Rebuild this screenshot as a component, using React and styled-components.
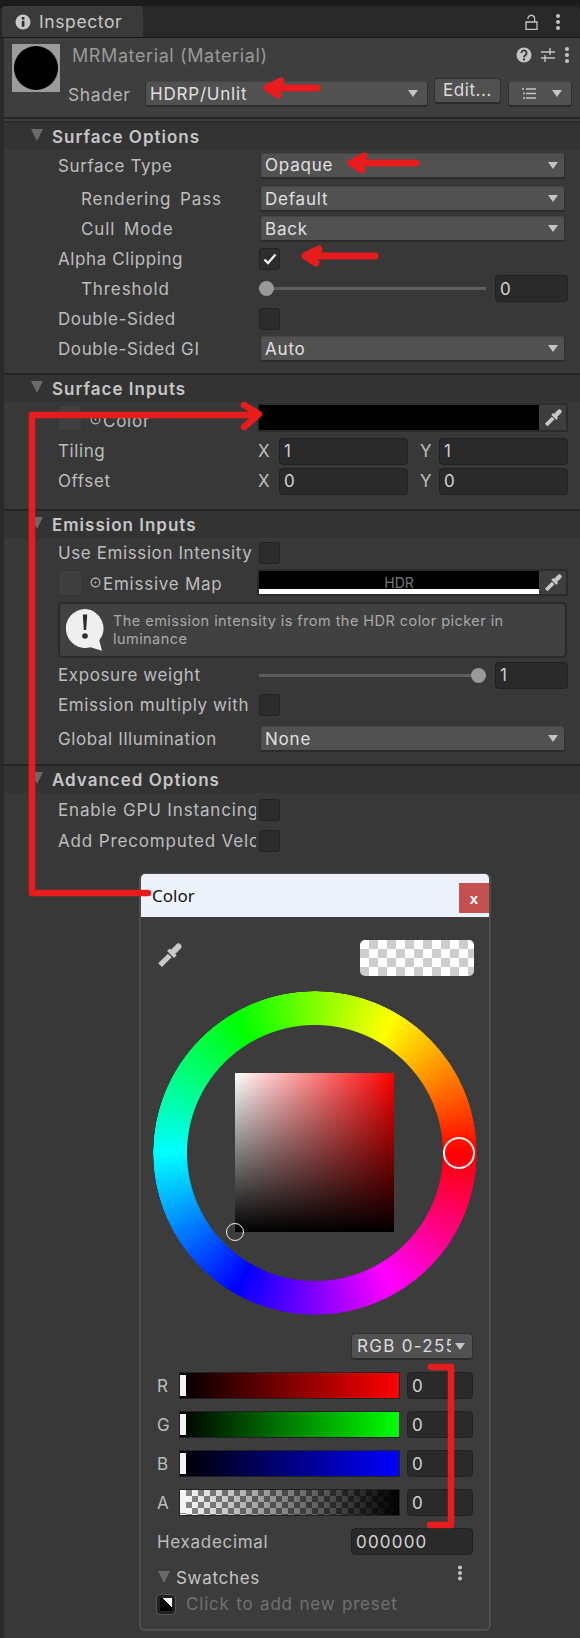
import styled, { createGlobalStyle } from "styled-components";

const GlobalStyle = createGlobalStyle`
  html, body { margin: 0; padding: 0; background: #2a2a2a; }
  body { width: 580px; height: 1638px; overflow: hidden; }
  * { box-sizing: border-box; }
`;

const Page = styled.div`
  position: relative;
  width: 580px;
  height: 1638px;
  overflow: hidden;
  display: flex;
  flex-direction: column;
  background: #2a2a2a;
  color: #c4c4c4;
  font-family: Inter, "Noto Sans", sans-serif;
  font-size: 17px;
  letter-spacing: 0.6px;
`;

const TabBar = styled.div`
  flex: none;
  height: 38px;
  padding-top: 6px;
  background: #1c1c1c;
`;

const TabStrip = styled.div`
  height: 100%;
  padding: 0 19px 0 2px;
  background: #292929;
  border-bottom: 1px solid #1a1a1a;
  border-radius: 5px 5px 0 0;
  display: flex;
  justify-content: space-between;
  align-items: stretch;
`;

const Tab = styled.div`
  width: 141px;
  background: #3a3a3a;
  border-radius: 4px 4px 0 0;
  padding-left: 13px;
  display: flex;
  align-items: center;
  gap: 8px;
  font-size: 17.5px;
  color: #c8c8c8;
`;

const TabTools = styled.div`
  display: flex;
  align-items: center;
  gap: 17px;
`;

const Panel = styled.div`
  flex: 1;
  margin-left: 3px;
  border-left: 1px solid #2a2a2a;
  background: #383838;
`;

const MaterialHeader = styled.div`
  height: 79px;
  padding: 3px 8px 0 8px;
  background: #3e3e3e;
  display: grid;
  grid-template-columns: 48px 1fr;
`;

const Thumb = styled.div`
  width: 48px;
  height: 48px;
  margin-top: 3px;
  background: #9c9c9c;
  display: flex;
  align-items: center;
  justify-content: center;
  &::after {
    content: "";
    width: 44px;
    height: 44px;
    border-radius: 50%;
    background: #000;
  }
`;

const HeaderBody = styled.div`
  display: flex;
  flex-direction: column;
`;

const NameRow = styled.div`
  height: 28px;
  padding: 0 0 0 12px;
  display: flex;
  align-items: center;
  justify-content: space-between;
  font-size: 18px;
  color: #999;
`;

const HeaderIcons = styled.div`
  display: flex;
  align-items: center;
  gap: 8px;
  padding-right: 2px;
`;

const ShaderRow = styled.div`
  margin: 7px 0 0 8px;
  height: 36px;
  display: flex;
  align-items: center;
`;

const ShaderLabel = styled.div`
  width: 77px;
  flex: none;
  color: #b4b4b4;
  font-size: 17.5px;
`;

const Select = styled.div`
  width: ${(p) => p.$w}px;
  height: ${(p) => p.$h || 26}px;
  margin-left: ${(p) => (p.$main ? 1 : 0)}px;
  flex: none;
  background: #515151;
  border: 1px solid #303030;
  border-top-color: #454545;
  border-bottom: 2px solid #2b2b2b;
  border-radius: 3px;
  padding: 0 ${(p) => (p.$main ? 6 : 9)}px 0 4px;
  display: flex;
  align-items: center;
  justify-content: space-between;
  color: #e0e0e0;
  letter-spacing: 0.8px;
  white-space: nowrap;
  overflow: hidden;
`;

const Caret = styled.span`
  flex: none;
  width: 0;
  height: 0;
  border-left: 5.5px solid transparent;
  border-right: 5.5px solid transparent;
  border-top: 7px solid #c4c4c4;
`;

const EditButton = styled.div`
  flex: none;
  width: 67px;
  height: 26px;
  margin: -7px 7px 0 6px;
  background: #515151;
  border: 1px solid #303030;
  border-bottom: 2px solid #2b2b2b;
  border-radius: 4px;
  display: flex;
  align-items: center;
  justify-content: center;
  color: #dcdcdc;
`;

const Rule = styled.div`
  height: 6px;
  border-top: 2px solid #242424;
  border-bottom: 2px solid #2b2b2b;
  background: #3c3c3c;
`;

const SectionHead = styled.div`
  height: 27px;
  padding-left: 27px;
  display: flex;
  align-items: center;
  gap: 9px;
  background: #333333;
  font-weight: 600;
  letter-spacing: 1px;
  color: #c6c6c6;
`;

const SectionRule = styled.div`
  height: 2px;
  background: #242424;
`;

const Triangle = styled.span`
  flex: none;
  margin-top: -3px;
  width: 0;
  height: 0;
  border-left: 6.5px solid transparent;
  border-right: 6.5px solid transparent;
  border-top: 12px solid #6a6a6a;
`;

const Rows = styled.div`
  padding-bottom: ${(p) => p.$bottom || 0}px;
`;

const Row = styled.div`
  height: ${(p) => p.$h || 30}px;
  margin-top: ${(p) => p.$mt || 0}px;
  padding: 0 12px 0 ${(p) => (p.$indent ? 77 : 54)}px;
  display: flex;
  align-items: center;
`;

const Label = styled.div`
  flex: none;
  width: ${(p) => p.$w || (p.$indent ? 178 : 201)}px;
  white-space: nowrap;
  overflow: hidden;
  color: #bdbdbd;
  ${(p) => p.$indent && "letter-spacing: 0.9px; word-spacing: 3px;"}
  ${(p) => p.$clipped && "letter-spacing: 0.85px;"}
`;

const Checkbox = styled.div`
  flex: none;
  width: 21px;
  height: 22px;
  margin-left: ${(p) => p.$ml || 0}px;
  background: #2c2c2c;
  border: 1px solid #222;
  border-radius: 3px;
  display: flex;
  align-items: center;
  justify-content: center;
`;

const Slider = styled.div`
  position: relative;
  width: 227px;
  height: 3px;
  flex: none;
  background: #5e5e5e;
  margin-right: 9px;
`;

const Knob = styled.span`
  position: absolute;
  top: -6px;
  left: ${(p) => p.$left}px;
  width: 15px;
  height: 15px;
  border-radius: 50%;
  background: #999;
`;

const NumberField = styled.div`
  flex: none;
  width: ${(p) => p.$w}px;
  height: 27px;
  background: #2a2a2a;
  border: 1px solid #212121;
  border-radius: 4px;
  padding-left: 4px;
  display: flex;
  align-items: center;
  color: #d2d2d2;
`;

const AxisName = styled.span`
  flex: none;
  width: ${(p) => p.$w}px;
  padding-left: ${(p) => p.$pad || 0}px;
  color: #bdbdbd;
`;

const ColorField = styled.div`
  flex: none;
  width: 311px;
  height: ${(p) => p.$h}px;
  background: #2c2c2c;
  border: 2px solid #2c2c2c;
  border-radius: 3px;
  display: flex;
`;

const ColorSwatch = styled.div`
  flex: 1;
  background: #000;
  color: #777;
  font-size: 14px;
  text-align: center;
  line-height: 23px;
  letter-spacing: 0;
  ${(p) => p.$hdr && "border-bottom: 5px solid #fff; overflow: hidden;"}
`;

const DropperCell = styled.div`
  flex: none;
  width: 27px;
  background: #3e3e3e;
  display: flex;
  align-items: center;
  justify-content: center;
`;

const MapSlot = styled.div`
  flex: none;
  width: 24px;
  height: 26px;
  background: #3f3f3f;
  border: 1px solid #353535;
  margin-right: 8px;
`;

const MapLabel = styled.div`
  flex: none;
  display: flex;
  align-items: center;
  width: 167px;
  margin-top: ${(p) => p.$drop || 0}px;
  white-space: nowrap;
  letter-spacing: 0.75px;
  color: #bdbdbd;
`;

const MapTarget = styled.svg`
  flex: none;
  width: 11px;
  height: 11px;
  margin: -3px 2px 0 0;
`;

const HelpBox = styled.div`
  height: 56px;
  margin: 4px 13px 0 54px;
  background: #414141;
  border: 2px solid #2a2a2a;
  border-radius: 5px;
  padding-left: 6px;
  display: flex;
  align-items: center;
  gap: 8px;
  font-size: 14.5px;
  line-height: 18px;
  letter-spacing: 0.45px;
  color: #a9a9a9;
`;

const ColorWindow = styled.div`
  position: absolute;
  left: 139px;
  top: 873px;
  width: 352px;
  height: 758px;
  background: #3c3c3c;
  border: 2px solid #4e4e4e;
  border-top-width: 1px;
  border-radius: 6px;
  overflow: hidden;
  display: flex;
  flex-direction: column;
`;

const WindowTitle = styled.div`
  flex: none;
  height: 43px;
  background: #edf2fa;
  color: #111;
  font-family: "Noto Sans", sans-serif;
  font-size: 17px;
  letter-spacing: 0;
  padding-left: 11px;
  display: flex;
  align-items: center;
  justify-content: space-between;
`;

const CloseButton = styled.div`
  align-self: flex-start;
  width: 30px;
  height: 30px;
  margin-top: 9px;
  background: #c55050;
  color: #fff;
  font-family: "Liberation Sans", sans-serif;
  font-weight: 700;
  font-size: 15px;
  display: flex;
  align-items: center;
  justify-content: center;
`;

const PreviewRow = styled.div`
  flex: none;
  height: 74px;
  padding: 23px 15px 0 16px;
  display: flex;
  justify-content: space-between;
  align-items: flex-start;
`;

const DropperSlot = styled.div`
  margin-top: 3px;
  display: flex;
`;

const Checker = styled.div`
  width: 114px;
  height: 36px;
  border-radius: 5px;
  background: repeating-conic-gradient(#cdcdcd 0 25%, #ffffff 0 50%) 0 0 / 18px 18px;
`;

const WheelWrap = styled.div`
  position: relative;
  flex: none;
  width: 324px;
  height: 324px;
  margin-left: 12px;
`;

const HueRing = styled.div`
  position: absolute;
  inset: 0;
  border-radius: 50%;
  background: conic-gradient(from 90deg, #f00, #f0f, #00f, #0ff, #0f0, #ff0, #f00);
  mask: radial-gradient(circle, transparent 127.5px, #000 128.5px, #000 161.5px, transparent 162px);
`;

const SvSquare = styled.div`
  position: absolute;
  left: 82px;
  top: 82px;
  width: 159px;
  height: 159px;
  background: linear-gradient(to top, #000, transparent), linear-gradient(to right, #fff, #f00);
`;

const Marker = styled.span`
  position: absolute;
  left: ${(p) => p.$x - p.$r}px;
  top: ${(p) => p.$y - p.$r}px;
  width: ${(p) => p.$r * 2}px;
  height: ${(p) => p.$r * 2}px;
  border-radius: 50%;
  border: ${(p) => p.$line}px solid #f0f0f0;
`;

const ModeRow = styled.div`
  flex: none;
  height: 27px;
  margin-top: 18px;
  padding-right: 16px;
  display: flex;
  justify-content: flex-end;
`;

const ModeSelect = styled.div`
  width: 122px;
  height: 27px;
  background: #515151;
  border: 1px solid #303030;
  border-bottom: 2px solid #2b2b2b;
  border-radius: 4px;
  padding: 0 7px 0 5px;
  display: flex;
  align-items: center;
  justify-content: space-between;
  color: #dcdcdc;
`;

const ModeText = styled.span`
  width: 94px;
  overflow: hidden;
  white-space: nowrap;
  letter-spacing: 1.3px;
`;

const Channels = styled.div`
  flex: none;
  padding: 12px 16px 0 16px;
  display: grid;
  row-gap: 12px;
`;

const Channel = styled.div`
  height: 27px;
  display: grid;
  grid-template-columns: 22px 221px 1fr;
  align-items: center;
  color: #bdbdbd;
`;

const Bar = styled.div`
  position: relative;
  height: 27px;
  border: 1px solid #222;
  background: ${(p) => p.$fill};
  &::before {
    content: "";
    position: absolute;
    left: 0;
    top: 2px;
    bottom: 2px;
    width: 6px;
    background: #f4f4f4;
  }
`;

const ChannelValue = styled(NumberField)`
  justify-self: end;
  width: 66px;
`;

const HexRow = styled.div`
  flex: none;
  height: 27px;
  margin-top: 12px;
  padding: 0 16px;
  display: flex;
  justify-content: space-between;
  align-items: center;
  letter-spacing: 0.7px;
  color: #bdbdbd;
`;

const HexField = styled(NumberField)`
  letter-spacing: 1.2px;
`;

const SwatchHead = styled.div`
  flex: none;
  height: 26px;
  margin-top: 10px;
  padding: 0 26px 0 17px;
  display: flex;
  align-items: center;
  justify-content: space-between;
  letter-spacing: 0.7px;
  color: #c6c6c6;
`;

const SwatchTitle = styled.div`
  display: flex;
  align-items: center;
  gap: 6px;
`;

const SwatchMenu = styled.svg`
  margin-top: -10px;
`;

const PresetRow = styled.div`
  flex: none;
  height: 26px;
  padding-left: 16px;
  display: flex;
  align-items: center;
  gap: 11px;
  letter-spacing: 0.8px;
  word-spacing: 1px;
  color: #717171;
`;

const PresetIcon = styled.div`
  width: 18px;
  height: 19px;
  background: linear-gradient(45deg, #000 62%, #fff 62%);
  border: 3px solid #222;
  outline: 1px solid #555;
  border-radius: 3px;
`;

const Annotations = styled.svg`
  position: absolute;
  left: 0;
  top: 0;
  pointer-events: none;
`;

const Dots = () => (
  <svg width="6" height="18" viewBox="0 0 6 18" fill="#c4c4c4">
    <circle cx="3" cy="3" r="2" />
    <circle cx="3" cy="9" r="2" />
    <circle cx="3" cy="15" r="2" />
  </svg>
);

const Dropper = ({ size = 18 }) => (
  <svg width={size} height={size} viewBox="0 0 18 18" fill="none" stroke="#c8c8c8">
    <path d="M12.300 5.700L15.400 2.600" strokeWidth="4.400" strokeLinecap="round" />
    <path d="M8.200 4.800l5 5" strokeWidth="2.600" />
    <path d="M9.200 9L2.200 16" strokeWidth="3.800" />
  </svg>
);

const Target = () => (
  <MapTarget viewBox="0 0 12 12">
    <circle cx="6" cy="6" r="4.800" fill="none" stroke="#bdbdbd" strokeWidth="1.200" />
    <circle cx="6" cy="6" r="1" fill="#bdbdbd" />
  </MapTarget>
);

const Check = () => (
  <svg width="14" height="12" viewBox="0 0 14 12">
    <path d="M1.500 6.500L5 10l7.500-8.500" fill="none" stroke="#efefef" strokeWidth="2.300" />
  </svg>
);

const App = () => {
  return (
    <Page>
      <GlobalStyle />
      <TabBar>
        <TabStrip>
          <Tab>
            <svg width="16" height="16" viewBox="0 0 16 16">
              <circle cx="8" cy="8" r="7.500" fill="#c8c8c8" />
              <rect x="6.800" y="6.800" width="2.600" height="6" fill="#2f2f2f" />
              <rect x="6.800" y="3" width="2.600" height="2.600" fill="#2f2f2f" />
            </svg>
            Inspector
          </Tab>
          <TabTools>
            <svg width="13" height="16" viewBox="0 0 13 16" fill="none" stroke="#c4c4c4" strokeWidth="1.300">
              <path d="M1 8h11v7.300H1zM3 5.200a3.300 3.300 0 0 1 6.600-1.200v4" />
            </svg>
            <Dots />
          </TabTools>
        </TabStrip>
      </TabBar>
      <Panel>
        <MaterialHeader>
          <Thumb />
          <HeaderBody>
            <NameRow>
              MRMaterial (Material)
              <HeaderIcons>
                <svg width="16" height="16" viewBox="0 0 16 16">
                  <circle cx="8" cy="8" r="7.500" fill="#c4c4c4" />
                  <path d="M5.400 6a2.600 2.600 0 1 1 4 2.200c-.9.6-1.400 1-1.400 2" fill="none" stroke="#333" strokeWidth="1.800" />
                  <rect x="7" y="11.400" width="2" height="2" fill="#333" />
                </svg>
                <svg width="16" height="16" viewBox="0 0 16 16" fill="none" stroke="#c4c4c4" strokeWidth="1.400">
                  <path d="M1 5h14M1 11h14M10 1v7M5 8v7" />
                </svg>
                <Dots />
              </HeaderIcons>
            </NameRow>
            <ShaderRow>
              <ShaderLabel>Shader</ShaderLabel>
              <Select $w={283}>
                HDRP/Unlit
                <Caret />
              </Select>
              <EditButton>Edit...</EditButton>
              <Select $w={64}>
                <svg width="15" height="13" viewBox="0 0 15 13" stroke="#c4c4c4" fill="none" style={{ marginLeft: 8 }}>
                  <path d="M5 2h10M5 6.500h10M5 11h10M1 2h2M2 6.500h2M2 11h2" strokeWidth="1.300" />
                </svg>
                <Caret />
              </Select>
            </ShaderRow>
          </HeaderBody>
        </MaterialHeader>
        <Rule />

        <SectionHead>
          <Triangle />
          Surface Options
        </SectionHead>
        <Rows $bottom={9}>
          <Row $h={31}>
            <Label>Surface Type</Label>
            <Select $main $w={305}>
              Opaque
              <Caret />
            </Select>
          </Row>
          <Row $indent $mt={3}>
            <Label $indent>Rendering Pass</Label>
            <Select $main $w={305}>
              Default
              <Caret />
            </Select>
          </Row>
          <Row $indent>
            <Label $indent>Cull Mode</Label>
            <Select $main $w={305}>
              Back
              <Caret />
            </Select>
          </Row>
          <Row $h={29}>
            <Label>Alpha Clipping</Label>
            <Checkbox>
              <Check />
            </Checkbox>
          </Row>
          <Row $indent $h={31}>
            <Label $indent>Threshold</Label>
            <Slider>
              <Knob $left={0} />
            </Slider>
            <NumberField $w={73}>0</NumberField>
          </Row>
          <Row>
            <Label>Double-Sided</Label>
            <Checkbox />
          </Row>
          <Row>
            <Label>Double-Sided GI</Label>
            <Select $main $w={305}>
              Auto
              <Caret />
            </Select>
          </Row>
        </Rows>
        <SectionRule />

        <SectionHead>
          <Triangle />
          Surface Inputs
        </SectionHead>
        <Rows $bottom={13}>
          <Row $h={31}>
            <MapSlot />
            <MapLabel $drop={6}>
              <Target />
              Color
            </MapLabel>
            <ColorField $h={29}>
              <ColorSwatch />
              <DropperCell>
                <Dropper />
              </DropperCell>
            </ColorField>
          </Row>
          <Row $mt={3}>
            <Label $w={200}>Tiling</Label>
            <AxisName $w={21}>X</AxisName>
            <NumberField $w={129}>1</NumberField>
            <AxisName $w={31} $pad={12}>Y</AxisName>
            <NumberField $w={129}>1</NumberField>
          </Row>
          <Row>
            <Label $w={200}>Offset</Label>
            <AxisName $w={21}>X</AxisName>
            <NumberField $w={129}>0</NumberField>
            <AxisName $w={31} $pad={12}>Y</AxisName>
            <NumberField $w={129}>0</NumberField>
          </Row>
        </Rows>
        <SectionRule />

        <SectionHead>
          <Triangle />
          Emission Inputs
        </SectionHead>
        <Rows $bottom={10}>
          <Row $h={29}>
            <Label>Use Emission Intensity</Label>
            <Checkbox />
          </Row>
          <Row $h={31}>
            <MapSlot />
            <MapLabel $drop={2}>
              <Target />
              Emissive Map
            </MapLabel>
            <ColorField $h={27}>
              <ColorSwatch $hdr>HDR</ColorSwatch>
              <DropperCell>
                <Dropper />
              </DropperCell>
            </ColorField>
          </Row>
          <HelpBox>
            <svg width="39" height="42" viewBox="0 0 39 42" style={{ flex: "none" }}>
              <path d="M19.500 0a19.500 19.500 0 1 0 5 38.300l11.500 3.500-2.700-10.500A19.500 19.500 0 0 0 19.500 0z" fill="#efefef" />
              <path d="M16.800 5.500h4.400l-1 15.500h-2.400z" fill="#2d2d2d" />
              <circle cx="19" cy="27" r="2.800" fill="#2d2d2d" />
            </svg>
            <span>The emission intensity is from the HDR color picker in luminance</span>
          </HelpBox>
          <Row $mt={2}>
            <Label>Exposure weight</Label>
            <Slider>
              <Knob $left={212} />
            </Slider>
            <NumberField $w={73}>1</NumberField>
          </Row>
          <Row>
            <Label>Emission multiply with</Label>
            <Checkbox />
          </Row>
          <Row $mt={4}>
            <Label>Global Illumination</Label>
            <Select $main $w={305}>
              None
              <Caret />
            </Select>
          </Row>
        </Rows>
        <SectionRule />

        <SectionHead>
          <Triangle />
          Advanced Options
        </SectionHead>
        <Rows>
          <Row $h={33}>
            <Label $clipped $w={198}>Enable GPU Instancing</Label>
            <Checkbox $ml={3} />
          </Row>
          <Row $h={29}>
            <Label $clipped $w={198}>Add Precomputed Velocity</Label>
            <Checkbox $ml={3} />
          </Row>
        </Rows>
      </Panel>

      <ColorWindow>
        <WindowTitle>
          Color
          <CloseButton>x</CloseButton>
        </WindowTitle>
        <PreviewRow>
          <DropperSlot>
            <Dropper size={25} />
          </DropperSlot>
          <Checker />
        </PreviewRow>
        <WheelWrap>
          <HueRing />
          <SvSquare />
          <Marker $x={306} $y={162} $r={16} $line={2.500} />
          <Marker $x={82} $y={241} $r={9} $line={1.500} />
        </WheelWrap>
        <ModeRow>
          <ModeSelect>
            <ModeText>RGB 0-255</ModeText>
            <Caret />
          </ModeSelect>
        </ModeRow>
        <Channels>
          <Channel>
            R
            <Bar $fill="linear-gradient(to right, #000, #f00)" />
            <ChannelValue>0</ChannelValue>
          </Channel>
          <Channel>
            G
            <Bar $fill="linear-gradient(to right, #000, #0f0)" />
            <ChannelValue>0</ChannelValue>
          </Channel>
          <Channel>
            B
            <Bar $fill="linear-gradient(to right, #000, #00f)" />
            <ChannelValue>0</ChannelValue>
          </Channel>
          <Channel>
            A
            <Bar $fill="linear-gradient(to right, transparent, #000), repeating-conic-gradient(#8a8a8a 0 25%, #fff 0 50%) 0 0 / 12px 12px" />
            <ChannelValue>0</ChannelValue>
          </Channel>
        </Channels>
        <HexRow>
          Hexadecimal
          <HexField $w={122}>000000</HexField>
        </HexRow>
        <SwatchHead>
          <SwatchTitle>
            <Triangle />
            Swatches
          </SwatchTitle>
          <SwatchMenu width="6" height="16" viewBox="0 0 6 16" fill="#c4c4c4">
            <circle cx="3" cy="2.500" r="2" />
            <circle cx="3" cy="8" r="2" />
            <circle cx="3" cy="13.500" r="2" />
          </SwatchMenu>
        </SwatchHead>
        <PresetRow>
          <PresetIcon />
          Click to add new preset
        </PresetRow>
      </ColorWindow>

      <Annotations width="580" height="1638" viewBox="0 0 580 1638" fill="none" stroke="#e81c1c" strokeLinecap="round" strokeLinejoin="round">
        <path d="M268 88h49M281 81l-14 7 11 7" strokeWidth="7" />
        <path d="M352 163h64M364 156l-13 7 11 7" strokeWidth="7" />
        <path d="M306 256h69M319 249l-14 7 11 7" strokeWidth="7" />
        <path d="M148 893H32V415h226M244 405l15 9-15 13" strokeWidth="6.500" />
        <path d="M431 1367h20v158h-21" strokeWidth="6.500" />
      </Annotations>
    </Page>
  );
};

export default App;
